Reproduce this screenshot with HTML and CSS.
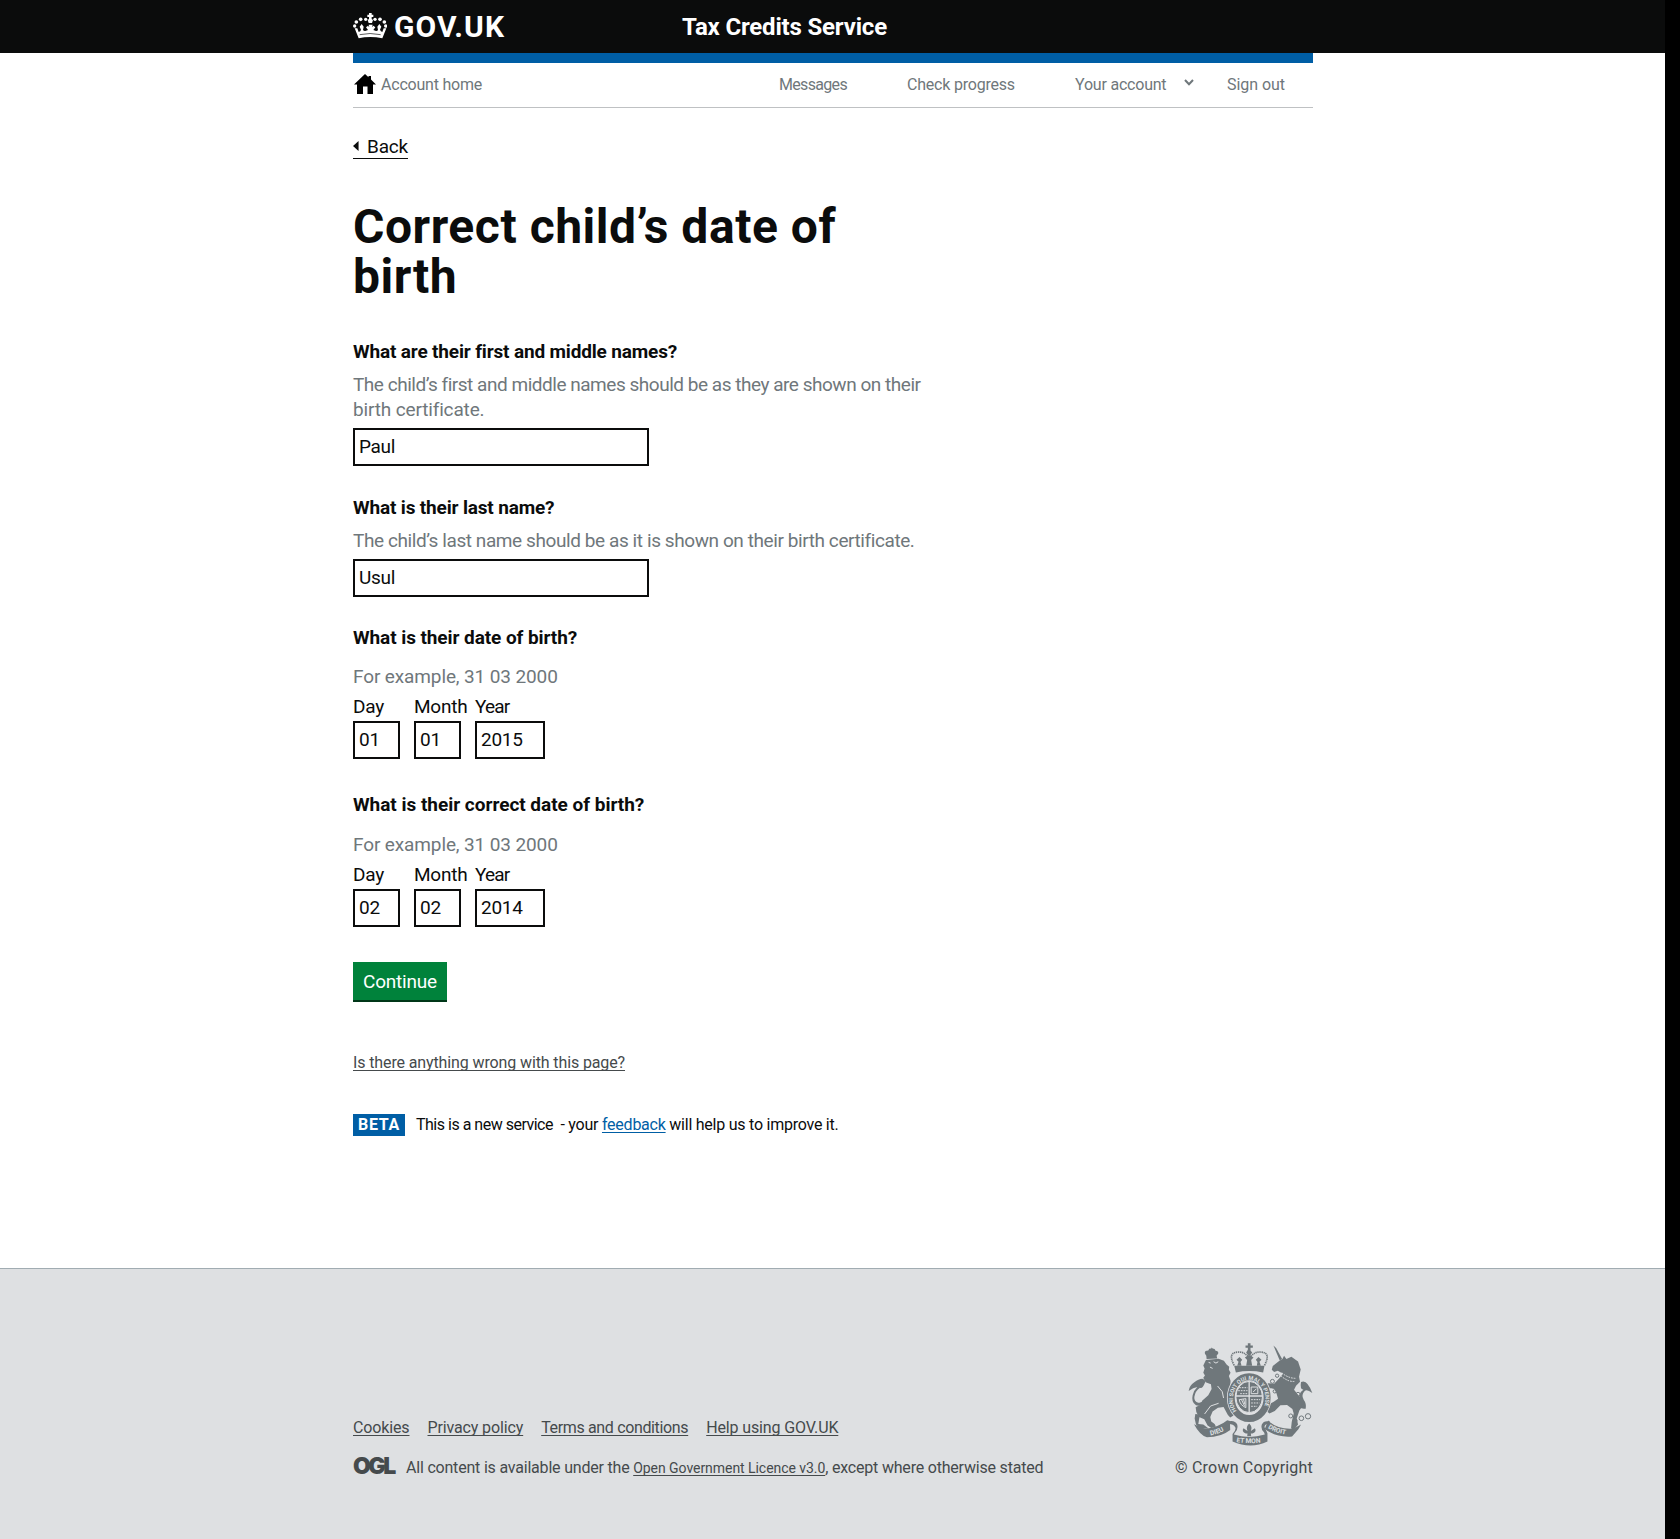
FILE: index.html
```html
<!DOCTYPE html>
<html lang="en">
<head>
<meta charset="utf-8">
<title>Correct child’s date of birth</title>
<link rel="stylesheet" href="styles.css">
</head>
<body>
<header class="masthead">
  <div class="wrap masthead-inner">
    <a class="brand" href="#">
      <svg class="crown" viewBox="0 0 102 78" aria-hidden="true">
        <g fill="#fff">
          <path d="M48 0h8v5h5v7h-5v6l4 3-3 9h-10l-3-9 4-3v-6h-5v-7h5z"/>
          <circle cx="38" cy="19" r="5"/><circle cx="66" cy="19" r="5"/>
          <circle cx="23" cy="19" r="5.500"/><circle cx="81" cy="19" r="5.500"/>
          <circle cx="10" cy="27" r="5.500"/><circle cx="94" cy="27" r="5.500"/>
          <circle cx="5" cy="39" r="5"/><circle cx="98" cy="39" r="5"/>
          <path d="M5 46l8 0 4 11q6-2 7-7l-4-9 6-8 6 8-2 10q4 5 9 2l6-2-6-8 6-5 4 5-2-8h12l-2 8 4-5 6 5-6 8 6 2q5 3 8-2l-2-10 6-8 6 8-4 9q2 5 7 7l4-11h8l-12 30Q51 68 17 76z"/>
        </g>
        <path d="M20 65Q51 58 83 65" fill="none" stroke="#0b0c0c" stroke-width="2"/>
      </svg>
      <span class="brand-name">GOV.UK</span>
    </a>
    <a class="service" href="#">Tax Credits Service</a>
  </div>
</header>
<div class="wrap">
  <nav class="account-nav">
    <a class="home" href="#">
      <svg class="house" viewBox="0 0 22 20" aria-hidden="true"><path d="M11 0L0 10.600h3V20h6v-7.500h4.500V20H19v-9.400h3L17 5.600V2h-2.500v1.300z"/></svg>
      <span>Account home</span>
    </a>
    <a class="messages" href="#">Messages</a>
    <a href="#">Check progress</a>
    <a href="#">Your account<svg class="chevron" viewBox="0 0 10 7" aria-hidden="true"><path d="M1 1l4 4.300L9 1"/></svg></a>
    <a class="sign-out" href="#">Sign out</a>
  </nav>
  <main>
    <a class="back" href="#"><span class="back-arrow"></span>Back</a>
    <h1>Correct child’s date of birth</h1>
    <form>
      <div class="field">
        <label class="question" for="first">What are their first and middle names?</label>
        <p class="hint">The child’s first and middle names should be as they are shown on their <span class="hint-end">birth certificate.</span></p>
        <input id="first" class="box wide" value="Paul">
      </div>
      <div class="field">
        <label class="question" for="last">What is their last name?</label>
        <p class="hint hint-last">The child’s last name should be as it is shown on their birth certificate.</p>
        <input id="last" class="box wide" value="Usul">
      </div>
      <fieldset class="dob">
        <legend class="question born">What is their date of birth?</legend>
        <p class="hint">For example, 31 03 2000</p>
        <div class="date">
          <label><span>Day</span><input class="box" value="01"></label>
          <label><span>Month</span><input class="box" value="01"></label>
          <label class="year"><span>Year</span><input class="box" value="2015"></label>
        </div>
      </fieldset>
      <fieldset class="dob second">
        <legend class="question corrected">What is their correct date of birth?</legend>
        <p class="hint">For example, 31 03 2000</p>
        <div class="date">
          <label><span>Day</span><input class="box" value="02"></label>
          <label><span>Month</span><input class="box" value="02"></label>
          <label class="year"><span>Year</span><input class="box" value="2014"></label>
        </div>
      </fieldset>
      <button class="continue" type="button">Continue</button>
    </form>
    <a class="report" href="#">Is there anything wrong with this page?</a>
    <div class="phase">
      <strong class="beta">BETA</strong>
      <p><span class="intro">This is a new service</span>&nbsp; - your <a href="#">feedback</a> will help us to improve it.</p>
    </div>
  </main>
</div>
<footer class="foot">
  <div class="wrap foot-inner">
    <div>
      <ul class="foot-links">
        <li><a href="#">Cookies</a></li>
        <li><a href="#">Privacy policy</a></li>
        <li><a class="terms" href="#">Terms and conditions</a></li>
        <li><a href="#">Help using GOV.UK</a></li>
      </ul>
      <div class="licence">
        <span class="ogl">OGL</span>
        <p>All content is available under the <a href="#">Open Government Licence v3.0</a>, except where otherwise stated</p>
      </div>
    </div>
    <a class="crown-copy" href="#">
      <svg class="arms" viewBox="68 41 376 309" aria-hidden="true">
        <defs>
          <path id="garter" d="M214 245A49 57 0 1 1 290 245"/>
          <path id="dieu" d="M136 319Q168 314 198 288"/>
          <path id="etmon" d="M213 338Q252 346 302 338"/>
          <path id="droit" d="M308 296Q334 314 376 317"/>
        </defs>
        <g fill="#6f777b">
          <!-- lion with its small crown -->
          <path d="M119 73q-2-8 5-9l5-1 3-5 6-1 1-3 3 3 6 2 3 5q9 0 8 8l-5 7 2 8-32 2-1-10z"/>
          <path d="M122 92l38-4 16 6 8 11 8 7-1 9 5 9-5 10 5 14-1 18-2 13-5 10 2 10 8 15-3 10 7 16 4 12-11 7-7-8-13-24-17 2-16 12-7 16 3 14 10 7 4 8-14 4-11-7-10-19-16-7-8-15-2-14 14-8 8-14 16-14 10-19-2-14-16-6-7-14 5-7-5-8 4-13-4-9z"/>
          <path d="M111 148q12 4 8 12-8 20-15 15-14 9-17 28-1 14 12 17 10 2 14-8l5 5q-9 16-26 11-15-9-10-30 4-16 14-25-12 1-26 12 2-16 17-26 13-11 24-11z"/>
          <path d="M90 254l14 2-3 16-2 12 15 2 16 12-25 1-13-13-4-18z"/>
          <!-- central crown -->
          <path d="M248 41h8v7h7v7h-7v8l5 6-5 8h-8l-5-8 5-8v-6h-7v-7h7z"/>
          <path d="M207 109h91l-4 20q-42-8-82 0z"/>
          <path d="M216 109l4-12-6-6 9-8 8 8-5 7 3 11zM243 109l3-17-7-8 13-8 13 8-7 8 3 17zM275 109l2-11-5-7 8-8 9 8-6 6 4 12z"/>
          <!-- unicorn -->
          <path d="M325 48l8 8 18 33-7 4z"/>
          <path d="M343 94l9-5 5-10 7 10 15-7 20 14 8 24-5 22 3 15-12 12-6 12 7 9 14 17 7 20-12 17-8 24 4 18-13 16-8-5 2-19 6-25-4-14-16-12-20 1-17 17-16 8-8-7 2-18 19-11 13-9-5-16-6-13-13-3-8 13 3 15-12 7-6-13-1-25 18-11 18 1 15-16 12-14-16-9-11 4-7-7 3-11z"/>
          <path d="M408 158q18-10 34 33-17-13-23-6-12 13-3 26 9 12 6 27-12 3-20-7 15 2 7-11-16-25 6-39-11-1-7-23z"/>
        </g>
        <!-- face, mane and collar details -->
        <path d="M347 139q23 20 43 17M350 130q19 17 44 17" fill="none" stroke="#dee0e2" stroke-width="3" stroke-dasharray="5 3"/>
        <path d="M145 97l7 4 7-4M130 99l6 2M134 113l8 4M118 254l18-24 24-8M157 170l14 17 4 19" fill="none" stroke="#dee0e2" stroke-width="3"/>
        <g fill="none" stroke="#6f777b" stroke-width="3">
          <path d="M207 108q-21-39 11-40 18-2 31 14M298 108q21-39-11-40-18-2-31 14" stroke-width="5" stroke-dasharray="4 2"/>
          <circle cx="336" cy="139" r="5"/><circle cx="322" cy="156" r="6"/><circle cx="309" cy="174" r="6"/><circle cx="329" cy="186" r="5"/>
          <circle cx="399" cy="195" r="6"/><circle cx="396" cy="226" r="7"/><circle cx="377" cy="260" r="6"/><circle cx="390" cy="274" r="6"/><circle cx="409" cy="267" r="7"/><circle cx="429" cy="261" r="8"/>
        </g>
        <!-- garter and shield -->
        <ellipse cx="252" cy="205" rx="67" ry="76" fill="#dee0e2"/>
        <ellipse cx="252" cy="205" rx="54" ry="63" fill="none" stroke="#6f777b" stroke-width="21"/>
        <ellipse cx="252" cy="203" rx="40" ry="47" fill="#6f777b" stroke="#dee0e2" stroke-width="3"/>
        <path d="M252 156v94M212 200h80" stroke="#dee0e2" stroke-width="4"/>
        <g fill="none" stroke="#dee0e2" stroke-width="3">
          <path d="M222 175h25M219 184h28M225 193h22" stroke-dasharray="5 3"/>
          <path d="M258 173h20v20h-20zM264 188l10-10"/>
          <path d="M222 211q3 17 20 24v-27zM229 211l9 19M235 210l4 15"/>
          <path d="M258 211h27M258 221h25M258 231h18" stroke-dasharray="5 3"/>
        </g>
        <!-- ribbon -->
        <g fill="#6f777b">
          <path d="M86 285l33 14q42-5 67-26l8 2 1 27q-28 22-70 22-20-4-39-39z"/>
          <path d="M190 276q20-4 26 10 4 16-8 26l-2 4q45 14 93 0l-2-6q-11-10-7-24 6-14 25-9l-6 7q-10 0-11 9l9 19v25q-50 24-105 0v-23q12-14 8-20-5-10-20-10z"/>
          <path d="M309 274q28 28 77 24l22-12-8 14-19 22q-48 4-82-23z"/>
          <path d="M252 283q11 10 5 22l12-8q7 10-7 16h-5l1 8h-12l1-8h-5q-14-6-7-16l12 8q-6-12 5-22z"/>
        </g>
        <g class="motto">
          <text class="motto-ring"><textPath href="#garter">HONI SOIT QUI MAL Y PENSE</textPath></text>
          <text><textPath href="#dieu">DIEU</textPath></text>
          <text><textPath href="#etmon">ET MON</textPath></text>
          <text><textPath href="#droit">DROIT</textPath></text>
        </g>
      </svg>
      <span>© Crown Copyright</span>
    </a>
  </div>
</footer>
</body>
</html>
```
FILE: styles.css
```css
* { box-sizing: border-box; }
html { background: #000; }
body {
  margin: 0;
  width: 1665px;
  background: #fff;
  color: #0b0c0c;
  font-family: Roboto, "Liberation Sans", sans-serif;
  font-size: 16px;
  line-height: 20px;
}
a { color: inherit; text-decoration: none; }
p, h1, ul { margin: 0; padding: 0; }
.wrap { width: 960px; margin: 0 auto 0 353px; }

.masthead { height: 53px; background: #0b0c0c; color: #fff; }
.masthead-inner { display: flex; height: 53px; }
.brand { display: flex; width: 329px; font-size: 30px; font-weight: 700; line-height: 54px; letter-spacing: 1.04px; }
.crown { width: 34px; height: 26px; margin: 13px 7px 0 0; }
.service { font-size: 24px; font-weight: 700; line-height: 55px; letter-spacing: -0.18px; }

.account-nav {
  display: grid;
  grid-template-columns: 426px 128px 168px 152px auto;
  height: 55px;
  padding-top: 12px;
  border-top: 10px solid #005ea5;
  border-bottom: 1px solid #bfc1c3;
  color: #6f777b;
  letter-spacing: -0.21px;
}
.messages { letter-spacing: -0.68px; }
.sign-out { letter-spacing: -0.05px; }
.home { display: flex; }
.house { width: 22px; height: 20px; margin: -1px 5px 0 1px; fill: #000; }
.chevron { width: 10px; height: 7px; margin: 0 0 4px 18px; fill: none; stroke: #6f777b; stroke-width: 2; }

.back { display: flex; width: 55px; height: 25px; margin-top: 26px; border-bottom: 1px solid #0b0c0c; font-size: 19px; line-height: 25px; letter-spacing: -0.2px; }
.back-arrow { width: 6px; height: 10px; margin: 7px 8.5px 0 0; background: #0b0c0c; clip-path: polygon(0 50%, 100% 0, 100% 100%); }
h1 { width: 560px; margin-top: 43px; font-size: 48px; line-height: 50px; font-weight: 700; letter-spacing: 0.54px; }
form { margin-top: 37px; font-size: 19px; line-height: 25px; }
.question { display: block; padding: 0; font-weight: 700; letter-spacing: -0.16px; }
.born { letter-spacing: -0.08px; }
.corrected { letter-spacing: -0.02px; }
.hint { width: 580px; margin: 8px 0 6px; color: #6f777b; letter-spacing: -0.475px; }
.hint-end { letter-spacing: -0.15px; }
.hint-last { letter-spacing: -0.415px; }
.box { display: block; width: 47px; height: 38px; padding: 3px 4px 5px; border: 2px solid #0b0c0c; border-radius: 0; background: #fff; color: #0b0c0c; font: 19px/26px Roboto, sans-serif; letter-spacing: -0.3px; }
.wide { width: 296px; }
.field { margin-bottom: 29px; }
.field + .dob { margin-top: -1px; }
.dob { margin: 0; padding: 0; border: 0; }
.dob .hint { margin: 14px 0 5px; letter-spacing: -0.12px; }
.dob.second { margin-top: 33px; }
.second .hint { margin-top: 15px; }
.date { display: flex; gap: 14px; }
.date label { display: block; width: 47px; white-space: nowrap; letter-spacing: -0.22px; }
.date .box { margin-top: 2px; }
.date .year, .date .year .box { width: 70px; }
.date .year span { letter-spacing: -0.85px; }
.continue { display: block; width: 94px; height: 38px; margin-top: 35px; padding: 2px 0 0 10px; border: 0; background: #00823b; box-shadow: 0 2px 0 #003618; color: #fff; font: 19px/36px Roboto, sans-serif; letter-spacing: -0.2px; text-align: left; }
.report, .phase a, .foot-links a, .licence a {
  text-decoration: underline;
  text-decoration-thickness: 1px;
  text-decoration-skip-ink: none;
  text-underline-offset: 2px;
}
.report { display: block; width: max-content; margin-top: 53px; color: #454a4c; letter-spacing: -0.12px; }
.phase { display: flex; margin-top: 41px; }
.phase p { padding-top: 1px; letter-spacing: -0.24px; }
.phase .intro { letter-spacing: -0.495px; }
.beta { width: 52px; height: 22px; margin-right: 11px; padding: 1px 0 0 5px; background: #005ea5; color: #fff; letter-spacing: 0.7px; }
.phase a { color: #005ea5; }

.foot { height: 271px; margin-top: 132px; border-top: 1px solid #a1acb2; background: #dee0e2; color: #454a4c; }
.foot-inner { display: flex; justify-content: space-between; align-items: flex-end; height: 209px; }
.foot-links { display: flex; gap: 18px; list-style: none; letter-spacing: -0.13px; }
.foot-links .terms { letter-spacing: -0.353px; }
.licence { display: flex; height: 20px; margin-top: 20px; letter-spacing: -0.2px; }
.ogl { width: 53px; font-family: Inter, sans-serif; font-size: 23px; font-weight: 900; line-height: 17px; letter-spacing: -2.5px; }
.licence a { font-size: 14px; letter-spacing: -0.05px; }
.crown-copy { display: flex; flex-direction: column; align-items: flex-end; white-space: nowrap; letter-spacing: 0.2px; }
.arms { width: 125px; height: 103px; margin-bottom: 12px; }
.motto { fill: #dee0e2; font-size: 20px; font-weight: 700; letter-spacing: 0; }
.motto-ring { font-size: 17px; }
```
